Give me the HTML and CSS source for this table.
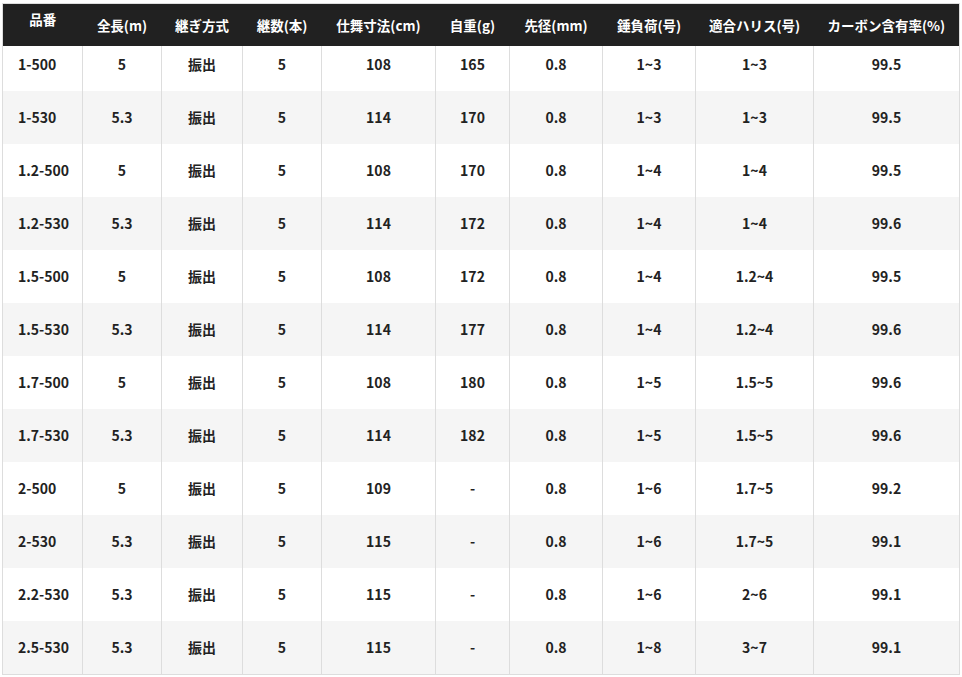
FILE: index.html
```html
<!DOCTYPE html>
<html lang="ja">
<head>
<meta charset="utf-8">
<link rel="stylesheet" href="styles.css">
</head>
<body>
<table class="spec">
<colgroup>
<col class="c1"><col class="c2"><col class="c3"><col class="c4"><col class="c5"><col class="c6"><col class="c7"><col class="c8"><col class="c9"><col class="c10">
</colgroup>
<thead>
<tr>
<th class="top">品番</th><th>全長(m)</th><th>継ぎ方式</th><th>継数(本)</th><th>仕舞寸法(cm)</th><th>自重(g)</th><th>先径(mm)</th><th>錘負荷(号)</th><th>適合ハリス(号)</th><th>カーボン含有率(%)</th>
</tr>
</thead>
<tbody>
<tr class="first"><td class="name">1-500</td><td>5</td><td>振出</td><td>5</td><td>108</td><td>165</td><td>0.8</td><td>1~3</td><td>1~3</td><td>99.5</td></tr>
<tr><td class="name">1-530</td><td>5.3</td><td>振出</td><td>5</td><td>114</td><td>170</td><td>0.8</td><td>1~3</td><td>1~3</td><td>99.5</td></tr>
<tr><td class="name">1.2-500</td><td>5</td><td>振出</td><td>5</td><td>108</td><td>170</td><td>0.8</td><td>1~4</td><td>1~4</td><td>99.5</td></tr>
<tr><td class="name">1.2-530</td><td>5.3</td><td>振出</td><td>5</td><td>114</td><td>172</td><td>0.8</td><td>1~4</td><td>1~4</td><td>99.6</td></tr>
<tr><td class="name">1.5-500</td><td>5</td><td>振出</td><td>5</td><td>108</td><td>172</td><td>0.8</td><td>1~4</td><td>1.2~4</td><td>99.5</td></tr>
<tr><td class="name">1.5-530</td><td>5.3</td><td>振出</td><td>5</td><td>114</td><td>177</td><td>0.8</td><td>1~4</td><td>1.2~4</td><td>99.6</td></tr>
<tr><td class="name">1.7-500</td><td>5</td><td>振出</td><td>5</td><td>108</td><td>180</td><td>0.8</td><td>1~5</td><td>1.5~5</td><td>99.6</td></tr>
<tr><td class="name">1.7-530</td><td>5.3</td><td>振出</td><td>5</td><td>114</td><td>182</td><td>0.8</td><td>1~5</td><td>1.5~5</td><td>99.6</td></tr>
<tr><td class="name">2-500</td><td>5</td><td>振出</td><td>5</td><td>109</td><td>-</td><td>0.8</td><td>1~6</td><td>1.7~5</td><td>99.2</td></tr>
<tr><td class="name">2-530</td><td>5.3</td><td>振出</td><td>5</td><td>115</td><td>-</td><td>0.8</td><td>1~6</td><td>1.7~5</td><td>99.1</td></tr>
<tr><td class="name">2.2-530</td><td>5.3</td><td>振出</td><td>5</td><td>115</td><td>-</td><td>0.8</td><td>1~6</td><td>2~6</td><td>99.1</td></tr>
<tr><td class="name">2.5-530</td><td>5.3</td><td>振出</td><td>5</td><td>115</td><td>-</td><td>0.8</td><td>1~8</td><td>3~7</td><td>99.1</td></tr>
</tbody>
</table>
</body>
</html>
```
FILE: styles.css
```css
html, body {
  margin: 0;
  padding: 0;
  background: #fff;
}
body {
  padding: 3px 0 0 2px;
  font-family: "Noto Sans CJK JP", "Noto Sans", sans-serif;
  font-weight: 700;
  font-size: 14px;
  color: #222;
}
.spec {
  border-collapse: collapse;
  table-layout: fixed;
  width: 957px;
  border: 1px solid #ddd;
}
.c1 { width: 80px; }
.c2 { width: 79px; }
.c3 { width: 81px; }
.c4 { width: 79px; }
.c5 { width: 114px; }
.c6 { width: 74px; }
.c7 { width: 93px; }
.c8 { width: 93px; }
.c9 { width: 118px; }
.c10 { width: 146px; }
.spec th {
  background: #212121;
  color: #fff;
  font-weight: 700;
  font-size: 13.5px;
  line-height: 20px;
  padding: 11px 0;
  text-align: center;
  vertical-align: middle;
  border: 0;
  white-space: nowrap;
}
.spec th.top {
  vertical-align: top;
  padding-top: 5px;
}
.spec td {
  line-height: 20px;
  padding: 16px 0 17px;
  text-align: center;
  vertical-align: middle;
  border-left: 1px solid #ddd;
  border-right: 1px solid #ddd;
}
.spec td.name {
  text-align: left;
  padding-left: 15px;
}
.spec tbody tr:nth-child(even) td {
  background: #f5f5f5;
}
.spec tbody tr.first td {
  padding-top: 8px;
}
```
